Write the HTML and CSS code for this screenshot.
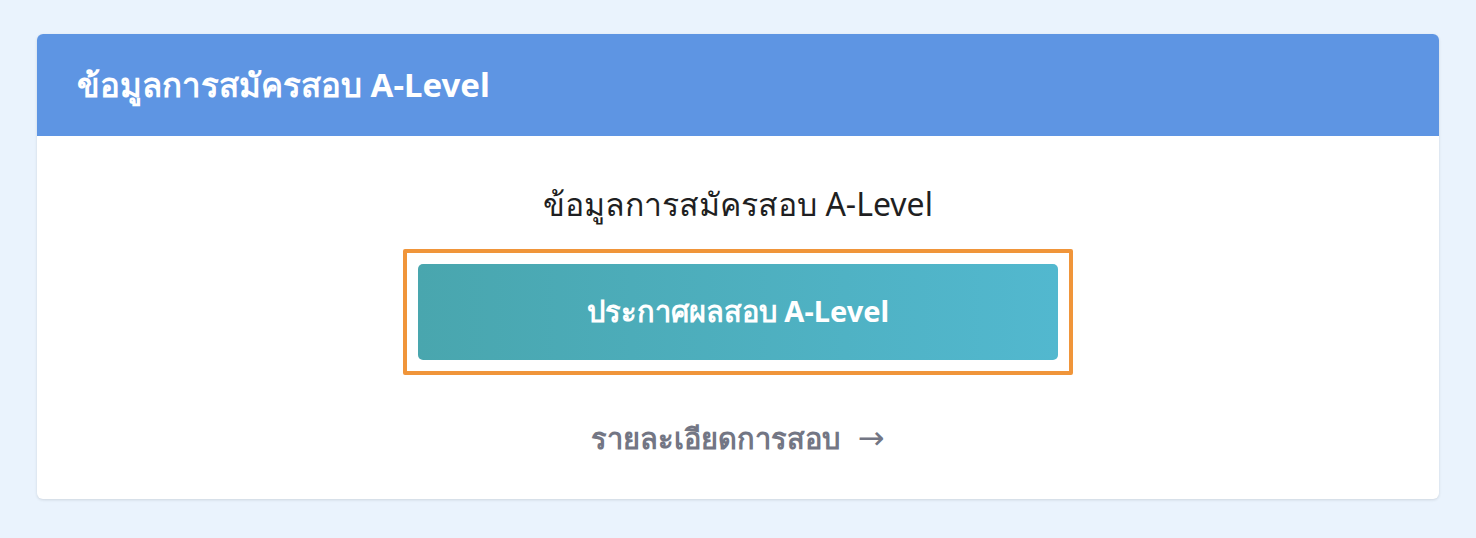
FILE: index.html
```html
<!DOCTYPE html>
<html>
  <head>
    <meta http-equiv="Content-Type" content="text/html; charset=UTF-8"/>
    <link rel="stylesheet" href="styles.css">
  </head>
  <body>
    <div class="examCard">
      <div class="examCardHeader">ข้อมูลการสมัครสอบ A-Level</div>
      <div class="examCardBody">
        <div class="examCardLead">ข้อมูลการสมัครสอบ A-Level</div>
        <div class="examHighlight">
          <button class="examResultButton" type="button">ประกาศผลสอบ A-Level</button>
        </div>
        <a class="examDetailLink" href="#">รายละเอียดการสอบ <span class="examDetailArrow">→</span></a>
      </div>
    </div>
  </body>
</html>
```

FILE: styles.css
```css
html {
  font-family: 'Noto Sans', 'DejaVu Sans', sans-serif;
  margin: 0;
  padding: 0;
}
body {
  margin: 0;
  padding: 34px 37px 39px;
  background: #eaf3fd;
}
.examCard {
  background: #ffffff;
  border-radius: 6px;
  overflow: hidden;
  box-shadow: 0 1px 3px rgba(0, 0, 0, 0.12);
}
.examCardHeader {
  background: #5e95e3;
  color: #ffffff;
  font-weight: 700;
  font-size: 33px;
  height: 102px;
  display: flex;
  align-items: center;
  padding: 0 40px;
}
.examCardBody {
  display: flex;
  flex-direction: column;
  align-items: center;
  padding: 48px 0 41px;
}
.examCardLead {
  color: #1f1f22;
  font-size: 32px;
  line-height: 40px;
  margin-bottom: 25px;
}
.examHighlight {
  border: 4px solid #f0953a;
  border-radius: 2px;
  padding: 11px 11px;
}
.examResultButton {
  display: block;
  width: 640px;
  height: 96px;
  border: none;
  border-radius: 5px;
  background: linear-gradient(90deg, #49a6ae, #52b8cf);
  color: #ffffff;
  font-family: inherit;
  font-weight: 700;
  font-size: 29px;
  padding: 0;
}
.examDetailLink {
  margin-top: 42px;
  color: #737684;
  font-weight: 700;
  font-size: 29px;
  line-height: 40px;
  text-decoration: none;
}
.examDetailArrow {
  font-weight: 400;
  font-size: 32px;
  margin-left: 10px;
}
```
